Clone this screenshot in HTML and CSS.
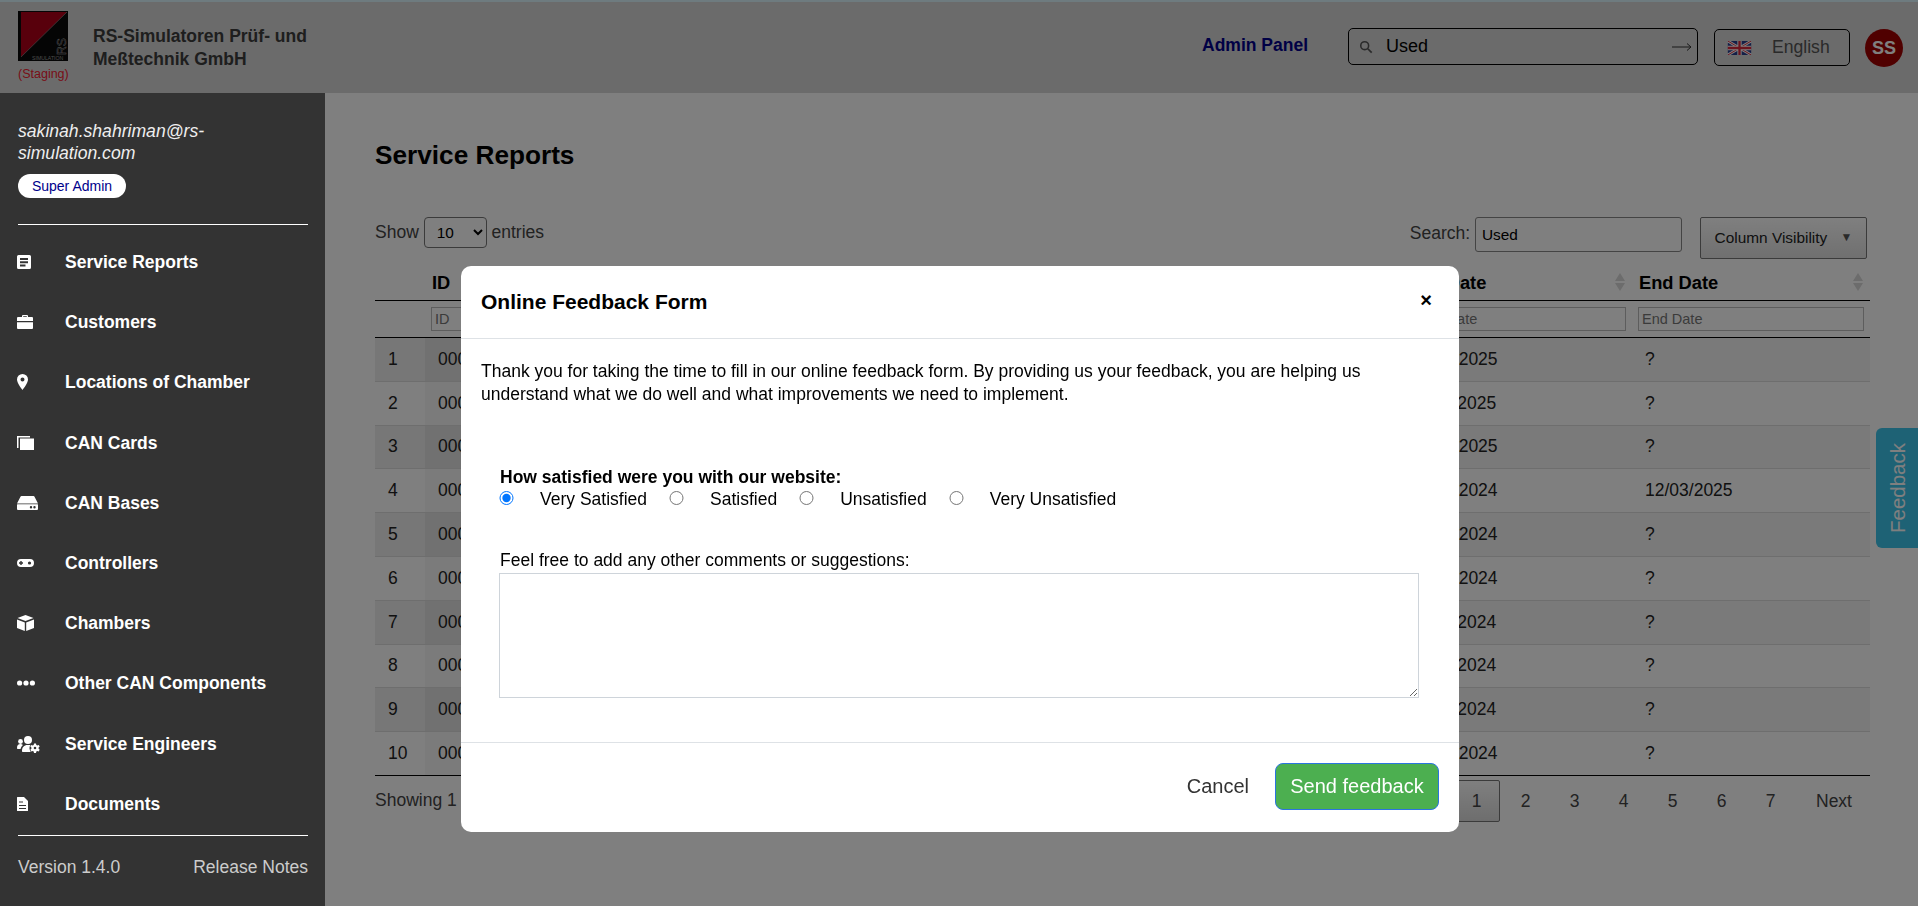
FILE: index.html
```html
<!DOCTYPE html>
<html lang="en">
<head>
<meta charset="UTF-8" />
<title>Service Reports</title>
<link rel="stylesheet" href="styles.css">
</head>
<body>
<header class="topbar">
  <div class="brand">
    <div class="logo-wrap">
      <svg class="logo" viewBox="0 0 50 50" aria-hidden="true">
        <rect width="50" height="50" fill="#0a0a0a"/>
        <polygon points="3,1 49,1 3,46" fill="#b00018"/>
        <line x1="3" y1="46" x2="49" y2="1" stroke="#999" stroke-width=".6"/>
        <text transform="translate(48 44) rotate(-90)" class="logo-rs">RS</text>
        <text x="14" y="49" class="logo-sim">SIMULATION</text>
      </svg>
      <div class="staging">(Staging)</div>
    </div>
    <div class="company">RS-Simulatoren Prüf- und<br>Meßtechnik GmbH</div>
  </div>
  <div class="top-actions">
    <a class="admin-link" href="#">Admin Panel</a>
    <div class="global-search">
      <svg class="search-icon" viewBox="0 0 16 16" aria-hidden="true"><circle cx="6.500" cy="6.500" r="4.500" fill="none" stroke="currentColor" stroke-width="1.800"/><line x1="10" y1="10" x2="14.500" y2="14.500" stroke="currentColor" stroke-width="2"/></svg>
      <span class="search-value">Used</span>
      <svg class="search-go" viewBox="0 0 20 10" aria-hidden="true"><path d="M0 5h19M15 1.500L19 5l-4 3.500" fill="none" stroke="currentColor"/></svg>
    </div>
    <div class="lang">
      <svg class="flag" viewBox="0 0 60 36" aria-hidden="true">
        <rect width="60" height="36" fill="#2a3f8f"/>
        <path d="M0 0L60 36M60 0L0 36" stroke="#fff" stroke-width="7"/>
        <path d="M0 0L60 36M60 0L0 36" stroke="#d8283c" stroke-width="2.500"/>
        <path d="M30 0V36M0 18H60" stroke="#fff" stroke-width="11"/>
        <path d="M30 0V36M0 18H60" stroke="#d8283c" stroke-width="6"/>
      </svg>
      <span>English</span>
    </div>
    <div class="avatar">SS</div>
  </div>
</header>

<div class="layout">
  <aside class="sidebar">
    <div class="user-email">sakinah.shahriman@rs-simulation.com</div>
    <span class="role-badge">Super Admin</span>
    <hr class="side-rule first">
    <nav class="side-nav">
      <a href="#"><svg viewBox="0 0 24 18"><path fill-rule="evenodd" d="M1.500 2h11A1.500 1.500 0 0 1 14 3.500v11a1.500 1.500 0 0 1-1.500 1.500h-11A1.500 1.500 0 0 1 0 14.500v-11A1.500 1.500 0 0 1 1.500 2zM3 5v2h8V5zm0 3.200v2h8v-2zm0 3.200v2h5.500v-2z"/></svg><span>Service Reports</span></a>
      <a href="#"><svg viewBox="0 0 24 18"><path fill-rule="evenodd" d="M5 4V3a1 1 0 0 1 1-1h4a1 1 0 0 1 1 1v1h4a1 1 0 0 1 1 1v3H0V5a1 1 0 0 1 1-1zM6.200 3.200V4h3.600v-.8z"/><path d="M0 9.200h16V15a1 1 0 0 1-1 1H1a1 1 0 0 1-1-1z"/></svg><span>Customers</span></a>
      <a href="#"><svg viewBox="0 0 24 18"><path fill-rule="evenodd" d="M5.500 1A5.500 5.500 0 0 1 11 6.500C11 10 7 15 5.500 17 4 15 0 10 0 6.500A5.500 5.500 0 0 1 5.500 1zm0 3.500a2 2 0 1 0 0 4 2 2 0 0 0 0-4z"/></svg><span>Locations of Chamber</span></a>
      <a href="#"><svg viewBox="0 0 24 18"><path d="M0 2h13v1.500H1.500V14H0zM3 4.500h14V16H3z"/></svg><span>CAN Cards</span></a>
      <a href="#"><svg viewBox="0 0 24 18"><path d="M4.500 2h12a1 1 0 0 1 .9.500L21 9.500H0l3.600-7a1 1 0 0 1 .9-.5z"/><path fill-rule="evenodd" d="M.5 10.300h20a.5.500 0 0 1 .5.500V15a1 1 0 0 1-1 1H1a1 1 0 0 1-1-1v-4.200a.5.500 0 0 1 .5-.5zM14 12a1.200 1.200 0 1 0 0 2.400 1.200 1.200 0 0 0 0-2.400zm3.500 0a1.200 1.200 0 1 0 0 2.400 1.200 1.200 0 0 0 0-2.400z"/></svg><span>CAN Bases</span></a>
      <a href="#"><svg viewBox="0 0 24 18"><path fill-rule="evenodd" d="M4 5h9a4 4 0 0 1 0 8H4a4 4 0 0 1 0-8zM3.300 7v1.300H2v1.400h1.300V11h1.400V9.700H6V8.300H4.700V7zM12.500 7.400a1.600 1.600 0 1 0 0 3.200 1.600 1.600 0 0 0 0-3.200z"/></svg><span>Controllers</span></a>
      <a href="#"><svg viewBox="0 0 24 18"><path d="M8.500 1l8 3-8 3-8-3zM0 5.500l7.800 3V17L0 14zM17 5.500l-7.800 3V17L17 14z"/></svg><span>Chambers</span></a>
      <a href="#"><svg viewBox="0 0 24 18"><circle cx="2.600" cy="9" r="2.600"/><circle cx="9" cy="9" r="2.600"/><circle cx="15.400" cy="9" r="2.600"/></svg><span>Other CAN Components</span></a>
      <a href="#"><svg viewBox="0 0 24 18"><circle cx="11" cy="5" r="4"/><circle cx="3.500" cy="6.500" r="2.400"/><path d="M0 13c0-2.500 1.200-4 3.500-4 1 0 1.800.3 2.400.9C4.500 11 3.800 12.500 3.600 14H1c-.6 0-1-.4-1-1zM5 16c0-3.500 2-6 5.500-6h3c-1.500 1.800-1.200 4.500.2 7H6c-.6 0-1-.4-1-1z"/><path fill-rule="evenodd" d="M17 8.500h2l.3 1.500 1 .5 1.400-.6 1 1.700-1.100 1v1.200l1.100 1-1 1.700-1.400-.6-1 .5-.3 1.500h-2l-.3-1.500-1-.5-1.400.6-1-1.700 1.100-1v-1.200l-1.100-1 1-1.700 1.400.6 1-.5zm1 3.200a1.300 1.300 0 1 0 0 2.600 1.300 1.300 0 0 0 0-2.600z"/></svg><span>Service Engineers</span></a>
      <a href="#"><svg viewBox="0 0 24 18"><path fill-rule="evenodd" d="M.5 2H7l4 4v9.500a.5.500 0 0 1-.5.500H.5a.5.500 0 0 1-.5-.5v-13A.5.500 0 0 1 .5 2zM2 6.500v1h4v-1zM2 10v1h7v-1zm0 3v1h7v-1z"/></svg><span>Documents</span></a>
    </nav>
    <hr class="side-rule">
    <div class="side-foot"><span>Version 1.4.0</span><a href="#">Release Notes</a></div>
  </aside>

  <main class="content">
    <h1>Service Reports</h1>
    <div class="table-tools">
      <label class="length">Show
        <select><option>10</option></select>
        entries</label>
      <div class="tools-right">
        <label class="filter">Search: <input type="text" value="Used"></label>
        <button type="button" class="col-vis">Column Visibility <i>▼</i></button>
      </div>
    </div>
    <table class="reports">
      <colgroup><col class="c-num"><col class="c-id"><col class="c-start"><col class="c-end"></colgroup>
      <thead>
        <tr class="head-row">
          <th></th>
          <th>ID</th>
          <th class="sortable start">Start Date</th>
          <th class="sortable">End Date</th>
        </tr>
        <tr class="filter-row">
          <th></th>
          <th><input type="text" placeholder="ID"></th>
          <th><input type="text" placeholder="Start Date"></th>
          <th><input type="text" placeholder="End Date"></th>
        </tr>
      </thead>
      <tbody>
        <tr><td>1</td><td>00066</td><td>14/02/2025</td><td>?</td></tr>
        <tr><td>2</td><td>00065</td><td>11/02/2025</td><td>?</td></tr>
        <tr><td>3</td><td>00064</td><td>06/01/2025</td><td>?</td></tr>
        <tr><td>4</td><td>00063</td><td>18/12/2024</td><td>12/03/2025</td></tr>
        <tr><td>5</td><td>00062</td><td>10/12/2024</td><td>?</td></tr>
        <tr><td>6</td><td>00061</td><td>02/12/2024</td><td>?</td></tr>
        <tr><td>7</td><td>00060</td><td>21/11/2024</td><td>?</td></tr>
        <tr><td>8</td><td>00059</td><td>14/11/2024</td><td>?</td></tr>
        <tr><td>9</td><td>00058</td><td>05/11/2024</td><td>?</td></tr>
        <tr><td>10</td><td>00057</td><td>28/10/2024</td><td>?</td></tr>
      </tbody>
    </table>
    <div class="table-foot">
      <div>Showing 1 to 10 of 66 entries</div>
      <div class="pager">
        <a href="#" class="current">1</a><a href="#">2</a><a href="#">3</a><a href="#">4</a><a href="#">5</a><a href="#">6</a><a href="#">7</a><a href="#" class="next">Next</a>
      </div>
    </div>
  </main>
</div>

<div class="feedback-tab"><span>Feedback</span></div>
<div class="backdrop"></div>

<div class="modal" role="dialog" aria-label="Online Feedback Form">
  <div class="modal-head">
    <h2>Online Feedback Form</h2>
    <button type="button" class="modal-close" aria-label="Close">×</button>
  </div>
  <div class="modal-body">
    <p class="intro">Thank you for taking the time to fill in our online feedback form. By providing us your feedback, you are helping us understand what we do well and what improvements we need to implement.</p>
    <div class="form-block">
      <div class="question">How satisfied were you with our website:</div>
      <div class="choices">
        <label><input type="radio" name="sat" checked><span>Very Satisfied</span></label>
        <label><input type="radio" name="sat"><span>Satisfied</span></label>
        <label><input type="radio" name="sat"><span>Unsatisfied</span></label>
        <label><input type="radio" name="sat"><span>Very Unsatisfied</span></label>
      </div>
      <label class="comment-label" for="comments">Feel free to add any other comments or suggestions:</label>
      <textarea id="comments"></textarea>
    </div>
  </div>
  <div class="modal-foot">
    <button type="button" class="btn-cancel">Cancel</button>
    <button type="button" class="btn-send">Send feedback</button>
  </div>
</div>
</body>
</html>
```

FILE: styles.css
```css
/* --- BASE --- */
*, *::before, *::after {
  box-sizing: border-box;
}
html, body {
  height: 100%;
}
body {
  margin: 0;
  overflow: hidden;
  background: #fff;
  color: #000;
  font-family: "Liberation Sans", Arial, sans-serif;
  font-size: 17.5px;
  display: flex;
  flex-direction: column;
}
a {
  color: inherit;
  text-decoration: none;
}

/* --- TOP BAR --- */
.topbar {
  height: 93px;
  flex: none;
  background: #d6d6d6;
  border-top: 2px solid #dcf6ff;
  display: flex;
  justify-content: space-between;
  padding: 0 15px 0 18px;
}
.brand {
  display: flex;
}
.logo-wrap {
  width: 50px;
  padding-top: 9px;
}
.logo {
  display: block;
  width: 50px;
  height: 50px;
}
.logo-rs {
  font: 12px "Liberation Sans", sans-serif;
  fill: #0a0a0a;
  stroke: #bbb;
  stroke-width: .4;
}
.logo-sim {
  font: 5.2px "Liberation Sans", sans-serif;
  fill: #999;
}
.staging {
  font-size: 12.5px;
  color: #f02030;
  margin-top: 6px;
  white-space: nowrap;
}
.company {
  margin: 23px 0 0 25px;
  font-size: 17.5px;
  line-height: 23px;
  font-weight: 700;
  color: #3c3c3c;
}
.top-actions {
  display: flex;
  align-items: flex-start;
}
.admin-link {
  margin: 33px 40px 0 0;
  font-weight: 700;
  color: #00008b;
}
.global-search {
  width: 350px;
  height: 37px;
  margin-top: 26px;
  border: 1px solid #000;
  border-radius: 5px;
  display: flex;
  align-items: center;
  padding: 0 5px 0 10px;
}
.search-icon {
  width: 14px;
  height: 14px;
  color: #555;
}
.search-value {
  margin-left: 13px;
  flex: 1;
  font-size: 18px;
}
.search-go {
  width: 20px;
  height: 10px;
  color: #333;
}
.lang {
  width: 136px;
  height: 37px;
  margin: 27px 0 0 16px;
  border: 1px solid #000;
  border-radius: 5px;
  display: flex;
  align-items: center;
  padding-left: 12px;
  font-size: 17.6px;
  color: #555;
}
.flag {
  width: 25px;
  height: 14px;
  margin-right: 20px;
}
.avatar {
  width: 38px;
  height: 38px;
  margin: 27px 0 0 15px;
  border-radius: 50%;
  background: #a00000;
  color: #fff;
  font-weight: 700;
  font-size: 18px;
  display: flex;
  align-items: center;
  justify-content: center;
}

/* --- SIDEBAR --- */
.layout {
  flex: 1;
  display: flex;
  min-height: 0;
}
.sidebar {
  position: relative;
  z-index: 20;
  width: 325px;
  flex: none;
  background: #333;
  color: #fff;
  padding: 27px 17px 0 18px;
}
.user-email {
  font-size: 17.6px;
  line-height: 22px;
  font-style: italic;
  color: #eee;
  overflow-wrap: anywhere;
  width: 230px;
}
.role-badge {
  display: inline-block;
  margin-top: 10px;
  width: 108px;
  height: 24px;
  line-height: 24px;
  text-align: center;
  border-radius: 12px;
  background: #fff;
  color: #00008b;
  font-size: 14px;
}
.side-rule {
  margin: 0;
  border: 0;
  border-top: 1px solid #fff;
}
.side-rule.first {
  margin-top: 26px;
}
.side-nav {
  margin-top: 7.5px;
  padding-bottom: .5px;
}
.side-nav a {
  height: 60.2px;
  display: flex;
  align-items: center;
  font-weight: 700;
}
.side-nav svg {
  width: 24px;
  height: 18px;
  fill: #fff;
  flex: none;
  margin: -1px 24px 0 -1px;
}
.side-foot {
  display: flex;
  justify-content: space-between;
  margin-top: 21px;
  color: #ccc;
}

/* --- MAIN TABLE AREA --- */
.content {
  flex: 1;
  min-width: 0;
  padding: 0 48px 0 50px;
}
h1 {
  margin: 47px 0 0;
  font-size: 26.2px;
  line-height: 30px;
}
.table-tools {
  margin-top: 47px;
  height: 43px;
  display: flex;
  justify-content: space-between;
  align-items: flex-start;
  color: #444;
}
.length select {
  width: 63px;
  height: 31px;
  margin: 0;
  font: 15.4px "Liberation Sans", sans-serif;
  padding-left: 8px;
  border: 1px solid #777;
  border-radius: 4px;
  background: #fff;
}
.tools-right {
  display: flex;
}
.filter input {
  width: 207px;
  height: 35px;
  font: 15.4px "Liberation Sans", sans-serif;
  padding: 0 6px;
  border: 1px solid #888;
  border-radius: 3px;
  vertical-align: -1px;
}
.col-vis {
  width: 167px;
  height: 42px;
  margin: 0 3px 0 18px;
  font: 15.4px "Liberation Sans", sans-serif;
  color: #222;
  border: 1px solid #777;
  border-radius: 2px;
  background: linear-gradient(#fff, #e0e0e0);
}
.col-vis i {
  font-style: normal;
  font-size: 12px;
  margin-left: 9px;
  color: #555;
  vertical-align: 2px;
}
.reports {
  width: 100%;
  table-layout: fixed;
  border-collapse: separate;
  border-spacing: 0;
}
.c-num { width: 50px; }
.c-start { width: 230px; }
.c-end { width: 238px; }
.head-row th {
  height: 41px;
  text-align: left;
  font-size: 18.3px;
  padding: 5px 7px 0;
  border-bottom: 1px solid #000;
  position: relative;
}
.head-row th.start {
  padding-left: 0;
  text-indent: -2px;
}
/* sort arrows */
.sortable::before,
.sortable::after {
  content: "";
  position: absolute;
  right: 7px;
  border-left: 5px solid transparent;
  border-right: 5px solid transparent;
}
.sortable::before {
  top: 13px;
  border-bottom: 8px solid #d8d8d8;
}
.sortable::after {
  top: 23px;
  border-top: 8px solid #d8d8d8;
}
.filter-row th {
  height: 37px;
  padding: 0 6px;
  border-bottom: 1px solid #000;
}
.filter-row input {
  display: block;
  width: 100%;
  height: 24px;
  border: 1px solid #bbb;
  padding: 0 3px;
  font: 14.5px "Liberation Sans", sans-serif;
}
.filter-row input::placeholder {
  color: #777;
}
.reports td {
  height: 43.8px;
  padding: 0 13px;
  border-bottom: 1px solid #ddd;
  color: #222;
}
.reports td:nth-child(3) {
  padding-left: 8px;
}
.reports tbody tr:nth-child(odd) {
  background: #f4f4f4;
}
.reports tbody tr:nth-child(odd) td:first-child {
  background: #eee;
}
.reports tbody tr td:nth-child(2) {
  background: #f6f6f6;
}
.reports tbody tr:nth-child(odd) td:nth-child(2) {
  background: #e3e3e3;
}
.reports tbody tr:last-child td {
  border-bottom-color: #000;
}
.table-foot {
  display: flex;
  justify-content: space-between;
  margin-top: 4px;
  color: #444;
}
.table-foot > div:first-child {
  padding-top: 10px;
}
.pager {
  display: flex;
  margin-right: 4px;
}
.pager a {
  width: 49px;
  height: 42px;
  line-height: 40px;
  text-align: center;
  border: 1px solid transparent;
}
.pager .current {
  width: 47px;
  margin-right: 1px;
  border: 1px solid #777;
  border-radius: 2px;
  background: linear-gradient(#fff, #dcdcdc);
}
.pager .next {
  width: 64px;
  margin-left: 7px;
}

/* --- FEEDBACK TAB --- */
.feedback-tab {
  position: fixed;
  right: 0;
  top: 428px;
  width: 42px;
  height: 120px;
  padding-left: 2px;
  background: #3cc4ea;
  color: #fff;
  border-radius: 6px 0 0 6px;
  font-size: 20.5px;
  display: flex;
  align-items: center;
  justify-content: center;
}
.feedback-tab span {
  writing-mode: vertical-rl;
  transform: rotate(180deg);
}

/* --- MODAL --- */
.backdrop {
  position: fixed;
  inset: 0;
  z-index: 10;
  background: rgba(0, 0, 0, 0.5);
}
.modal {
  position: fixed;
  z-index: 30;
  left: 461px;
  top: 266px;
  width: 998px;
  height: 566px;
  background: #fff;
  border-radius: 10px;
  display: flex;
  flex-direction: column;
}
.modal-head {
  height: 73px;
  flex: none;
  border-bottom: 1px solid #dee2e6;
  display: flex;
  align-items: center;
  justify-content: space-between;
  padding: 0 27px 0 20px;
}
.modal-head h2 {
  margin: 0;
  font-size: 21px;
}
.modal-close {
  border: 0;
  padding: 0 0 4px;
  background: none;
  font: 700 20px "Liberation Sans", sans-serif;
  color: #000;
}
.modal-body {
  flex: 1;
  padding: 21px 20px 0;
}
.intro {
  margin: 0;
  line-height: 23px;
}
.form-block {
  margin: 61px 20px 0 18px;
}
.question {
  font-weight: 700;
  line-height: 20px;
  padding-left: 1px;
}
.choices {
  display: flex;
  line-height: 21px;
}
.choices label {
  display: flex;
  align-items: flex-start;
  margin-right: 22px;
}
.choices input {
  margin: 4px 26px 0 0;
  width: 15px;
  height: 14px;
}
.choices span {
  margin-top: 2px;
}
.comment-label {
  display: block;
  margin-top: 40px;
  padding-left: 1px;
  line-height: 20px;
}
.form-block textarea {
  display: block;
  width: 100%;
  height: 125px;
  margin-top: 3px;
  border: 1px solid #ced4da;
}
.modal-foot {
  height: 90px;
  flex: none;
  border-top: 1px solid #dee2e6;
  display: flex;
  align-items: flex-start;
  justify-content: flex-end;
  padding: 20px 20px 0 0;
}
.btn-cancel {
  height: 47px;
  border: 0;
  background: none;
  margin-right: 26px;
  padding: 0;
  font: 20px "Liberation Sans", sans-serif;
  color: #333;
}
.btn-send {
  width: 164px;
  height: 47px;
  border: 1px solid #2b74e0;
  border-radius: 8px;
  background: #4caf50;
  color: #fff;
  font: 20px "Liberation Sans", sans-serif;
}
```
